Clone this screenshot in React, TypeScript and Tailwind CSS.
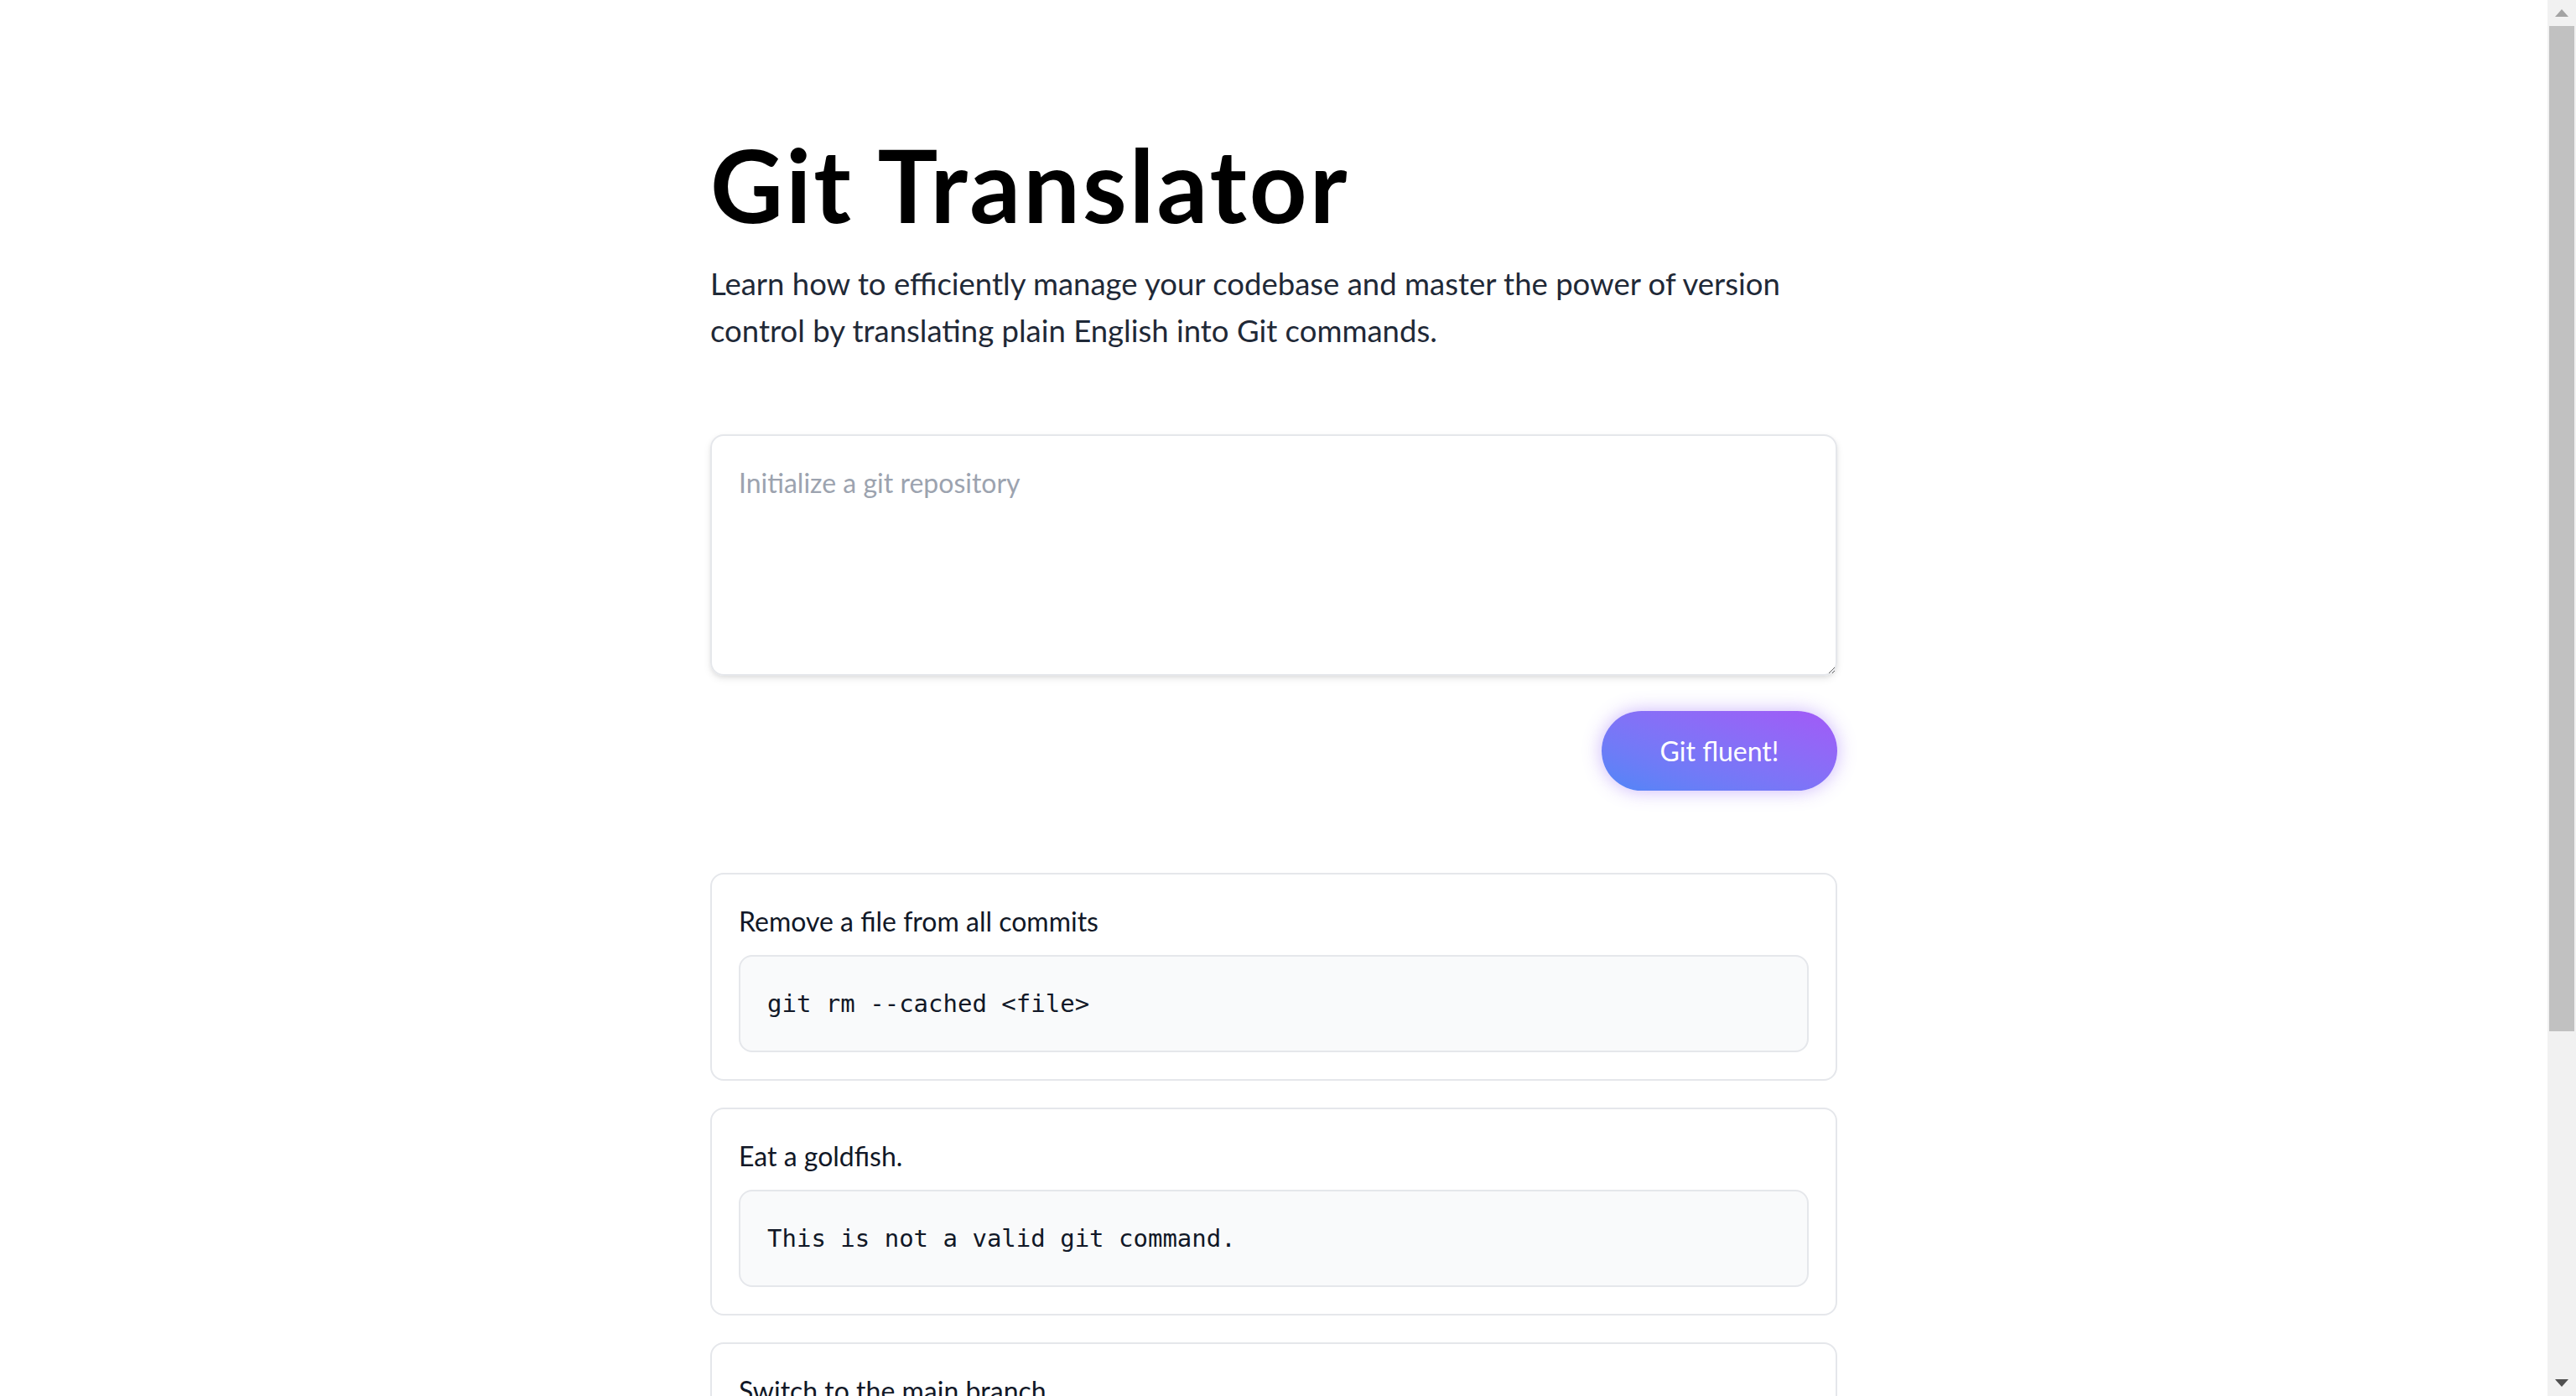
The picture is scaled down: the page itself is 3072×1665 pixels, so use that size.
import { useState } from "react";

interface IExample {
  prompt: string;
  command: string;
}

const examples: IExample[] = [
  { prompt: "Remove a file from all commits", command: "git rm --cached <file>" },
  { prompt: "Eat a goldfish.", command: "This is not a valid git command." },
  { prompt: "Switch to the main branch", command: "git checkout main" },
  { prompt: "Undo the last commit", command: "git reset --soft HEAD~1" },
];

function ExampleCard(props: IExample) {
  return (
    <div className="rounded-[16px] border-2 border-[#e5e7eb] bg-white p-[32px]">
      <p className="text-[32px] leading-[48px] text-[#111827]">{props.prompt}</p>
      <pre className="mt-[16px] rounded-[16px] border-2 border-[#e5e7eb] bg-[#f9fafb] p-[32px] font-['DejaVu_Sans_Mono','Liberation_Mono',monospace] text-[29px] leading-[48px] text-[#111827]">
        {props.command}
      </pre>
    </div>
  );
}

// classic windows-style scrollbar, as in the screenshot
function ScrollTrack() {
  return (
    <div className="flex h-screen w-[34px] shrink-0 flex-col bg-[#f1f1f1]">
      <div className="flex h-[31px] items-center justify-center">
        <svg width="16" height="9" viewBox="0 0 16 9">
          <path d="M8 0 L16 9 L0 9 Z" fill="#a3a3a3" />
        </svg>
      </div>
      <div className="mx-[2px] h-[1199px] bg-[#c1c1c1]" />
      <div className="flex-1" />
      <div className="flex h-[31px] items-center justify-center">
        <svg width="16" height="9" viewBox="0 0 16 9">
          <path d="M0 0 L16 0 L8 9 Z" fill="#505050" />
        </svg>
      </div>
    </div>
  );
}

export default function App() {
  const [query, setQuery] = useState("");

  return (
    <div className="flex h-screen overflow-hidden bg-white font-['Lato','Noto_Sans',sans-serif]">
      <div className="flex-1 overflow-y-auto [scrollbar-width:none]">
        <main className="mx-auto w-[1344px] pt-[160px] pb-[100px]">
          <h1 className="text-[120px] font-bold leading-[120px] tracking-[3px] text-black">Git Translator</h1>
          <p className="mt-[30px] text-[36.5px] leading-[56px] text-[#1f2937]">
            Learn how to efficiently manage your codebase and master the power of version control by translating
            plain English into Git commands.
          </p>

          <form className="mt-[96px] flex flex-col" onSubmit={(e) => e.preventDefault()}>
            <textarea
              className="h-[288px] w-full rounded-[16px] border-2 border-[#e5e7eb] p-[32px] text-[32px] leading-[48px] text-[#111827] shadow-[0_4px_10px_rgba(0,0,0,0.08),0_2px_4px_rgba(0,0,0,0.06)] outline-none placeholder:text-[#9ca3af]"
              placeholder="Initialize a git repository"
              value={query}
              onChange={(e) => setQuery(e.target.value)}
            />
            <div className="mt-[42px] flex justify-end">
              <button
                type="submit"
                className="h-[95px] w-[281px] rounded-full bg-linear-to-tr from-[#4f86f7] to-[#a259f7] text-[32px] leading-[48px] text-white shadow-[0_0_22px_rgba(139,92,246,0.45)]"
              >
                Git fluent!
              </button>
            </div>
          </form>

          <div className="mt-[98px] flex flex-col gap-[32px]">
            {examples.map((ex) => (
              <ExampleCard key={ex.prompt} prompt={ex.prompt} command={ex.command} />
            ))}
          </div>
        </main>
      </div>
      <ScrollTrack />
    </div>
  );
}
